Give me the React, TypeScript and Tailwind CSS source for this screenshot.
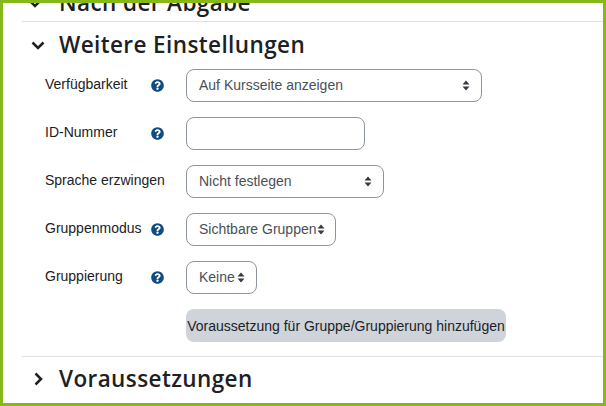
import React from "react";

function Help() {
  return (
    <svg viewBox="0 0 512 512" className="w-[13px] h-[13px] shrink-0 fill-[#0f4c81]">
      <path d="M504 256c0 137-111 248-248 248S8 393 8 256 119 8 256 8s248 111 248 248zM262.700 90c-54.500 0-89.300 23-116.500 63.800-3.500 5.300-2.400 12.400 2.700 16.300l34.700 26.300c5.200 3.900 12.600 3 16.700-2.100 17.900-22.700 30.100-35.800 57.300-35.800 20.400 0 45.700 13.100 45.700 33 0 15-12.400 22.700-32.600 34-23.600 13.200-54.800 29.700-54.800 70.900V300c0 6.600 5.400 12 12 12h56c6.600 0 12-5.400 12-12v-1.300c0-28.600 83.500-29.800 83.500-107.200C379.500 133.200 319 90 262.700 90zM256 339c-25.500 0-46.200 20.700-46.200 46.200s20.700 46.200 46.200 46.200 46.200-20.700 46.200-46.200S281.500 339 256 339z" />
    </svg>
  );
}

function Caret() {
  return (
    <svg viewBox="0 0 8 11" className="w-[8px] h-[11px] shrink-0 fill-[#343a40]">
      <path d="M4 0.500 L7.500 4.500 H0.500 Z M4 10.500 L0.500 6.500 H7.500 Z" />
    </svg>
  );
}

function Row({ label, help, children }: { label: string; help?: boolean; children: React.ReactNode }) {
  return (
    <div className="flex items-center h-[32px] mb-4">
      <div className="w-[105px] shrink-0 whitespace-nowrap -mt-[2px]">{label}</div>
      <div className="w-[36px] shrink-0 pl-[1px]">{help && <Help />}</div>
      {children}
    </div>
  );
}

function Select({ text, width }: { text: string; width: string }) {
  return (
    <div className={`flex items-center justify-between h-[33px] pl-3 pr-[11px] border border-[#8f959e] rounded-lg text-[#495057] ${width}`}>
      <span className="whitespace-nowrap -mt-[1px]">{text}</span>
      <Caret />
    </div>
  );
}

export default function App() {
  return (
    <div className="w-[606px] h-[406px] box-border border-[3px] border-[#86b817] bg-white overflow-hidden font-['Liberation_Sans',Arial,sans-serif] text-[14px] leading-[20px] text-[#1d2125]">
      <div className="ml-[19px] -mt-[19px]">
        <div className="flex items-center h-[38px] border-b border-[#dee2e6] pl-[6px]">
          <svg viewBox="0 0 14 14" className="w-[14px] h-[14px] fill-none stroke-[#1d2125] stroke-[2.500]"><path d="M2 5l5 5 5-5" /></svg>
          <h3 className="ml-[17px] font-['Open_Sans',sans-serif] font-semibold text-[22.500px] leading-[30px] tracking-[0.4px]">Nach der Abgabe</h3>
        </div>
        <div className="flex items-center h-[46px] pl-[9px]">
          <svg viewBox="0 0 14 14" className="w-[14px] h-[14px] fill-none stroke-[#1d2125] stroke-[2.500]"><path d="M1.500 4.500l5.500 5.500 5.500-5.500" /></svg>
          <h3 className="ml-[14px] font-['Open_Sans',sans-serif] font-semibold text-[22.500px] leading-[30px] tracking-[0.4px] whitespace-nowrap">Weitere Einstellungen</h3>
        </div>
        <div className="pl-[23px] pt-[1px]">
          <Row label="Verfügbarkeit" help><Select text="Auf Kursseite anzeigen" width="w-[296px]" /></Row>
          <Row label="ID-Nummer" help>
            <input aria-label="ID-Nummer" className="w-[179px] h-[33px] border border-[#8f959e] rounded-lg bg-white" />
          </Row>
          <Row label="Sprache erzwingen"><Select text="Nicht festlegen" width="w-[198px]" /></Row>
          <Row label="Gruppenmodus" help><Select text="Sichtbare Gruppen" width="w-[150px]" /></Row>
          <Row label="Gruppierung" help><Select text="Keine" width="w-[71px]" /></Row>
          <div className="pl-[141px]">
            <button className="h-[33px] w-[320px] rounded-lg bg-[#ced4da] text-[#1d2125] text-center whitespace-nowrap">Voraussetzung für Gruppe/Gruppierung hinzufügen</button>
          </div>
        </div>
        <div className="mt-[14px] border-t border-[#dee2e6] flex items-center h-[44px] pl-[9px]">
          <svg viewBox="0 0 14 14" className="w-[14px] h-[14px] fill-none stroke-[#1d2125] stroke-[2.500]"><path d="M4.500 1.500l5.500 5.500-5.500 5.500" /></svg>
          <h3 className="ml-[14px] font-['Open_Sans',sans-serif] font-semibold text-[22.500px] leading-[30px] tracking-[0.4px] whitespace-nowrap">Voraussetzungen</h3>
        </div>
      </div>
    </div>
  );
}
